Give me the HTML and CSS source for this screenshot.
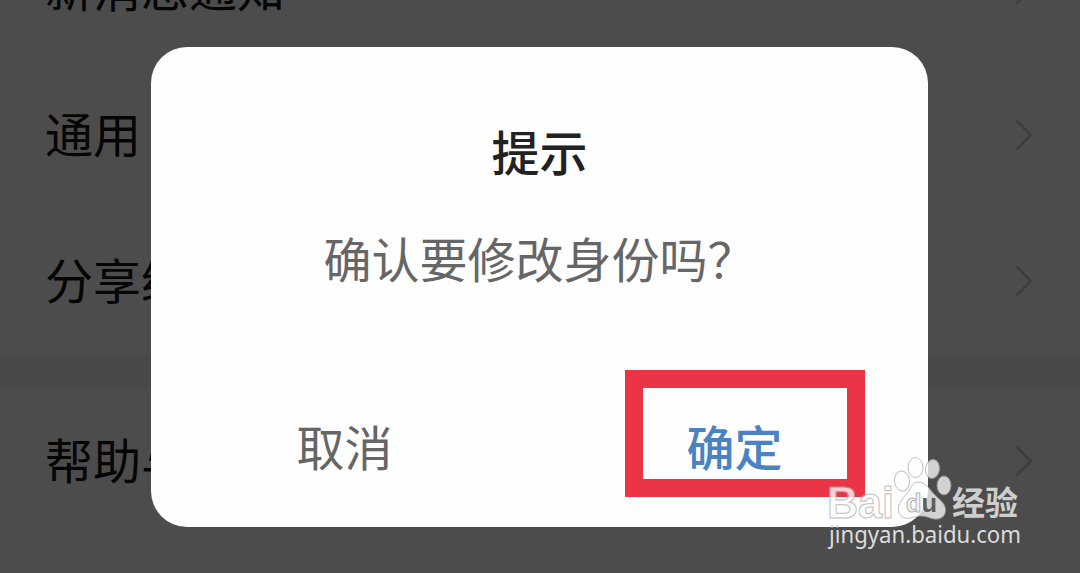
FILE: index.html
```
<!DOCTYPE html>
<html lang="zh-CN">
<head>
    <meta charset="UTF-8">
    <meta name="viewport" content="width=device-width, initial-scale=1.0">
    <title>设置</title>
    <link rel="stylesheet" href="styles.css">
</head>
<body>
    <div class="settings">
        <div class="settings-row">
            <span>新消息通知</span>
            <svg class="arrow" viewBox="0 0 24 40"><path d="M3 3 L20 20 L3 37"/></svg>
        </div>
        <div class="settings-row">
            <span>通用</span>
            <svg class="arrow" viewBox="0 0 24 40"><path d="M3 3 L20 20 L3 37"/></svg>
        </div>
        <div class="settings-row">
            <span>分享给</span>
            <svg class="arrow" viewBox="0 0 24 40"><path d="M3 3 L20 20 L3 37"/></svg>
        </div>
        <div class="settings-gap"></div>
        <div class="settings-row">
            <span>帮助与</span>
            <svg class="arrow" viewBox="0 0 24 40"><path d="M3 3 L20 20 L3 37"/></svg>
        </div>
    </div>

    <div class="overlay">
        <div class="dialog">
            <h1 class="dialog-title">提示</h1>
            <p class="dialog-message">确认要修改身份吗？</p>
            <div class="dialog-actions">
                <button class="dialog-button">取消</button>
                <button class="dialog-button confirm">确定</button>
            </div>
        </div>
    </div>

    <div class="highlight"></div>

    <svg class="watermark" viewBox="0 0 210 100">
        <g class="logo">
            <text class="logo-latin" x="7" y="67.500" textLength="67" lengthAdjust="spacingAndGlyphs">Bai</text>
            <ellipse cx="82" cy="31" rx="7.500" ry="10" transform="rotate(-8 82 31)"/>
            <ellipse cx="95.500" cy="17.500" rx="7.500" ry="10"/>
            <ellipse cx="112.500" cy="19" rx="7" ry="9.500" transform="rotate(8 112.500 19)"/>
            <ellipse cx="124" cy="35.500" rx="7" ry="9.500"/>
            <path d="M98 32 C106 32 109 39 115 45 C121 51 126 54 125.500 61 C125 68 118 71 110 68 C105 66 99 65 91 68 C83 70 76 64 79 55 C82 47 88 44 91 37 C93 34 95 32 98 32 Z"/>
        </g>
        <text class="logo-du" x="86" y="62" textLength="31" lengthAdjust="spacingAndGlyphs"><tspan class="logo-d">d</tspan>u</text>
        <text class="logo-cn" x="132" y="65" textLength="66" lengthAdjust="spacingAndGlyphs">经验</text>
        <text class="site" x="9" y="93" textLength="192" lengthAdjust="spacingAndGlyphs">jingyan.baidu.com</text>
    </svg>
</body>
</html>
```

FILE: styles.css
```
* {
    margin: 0;
    padding: 0;
    box-sizing: border-box;
}

body {
    position: relative;
    height: 573px;
    overflow: hidden;
    background: #4c4c4c;
    font-family: "Noto Sans CJK SC", sans-serif;
    font-size: 48px;
}

.settings {
    margin-top: -84px;
}

.settings-row {
    display: flex;
    align-items: center;
    justify-content: space-between;
    height: 146px;
    padding: 0 44px 0 45px;
    color: #050505;
    line-height: 70px;
}

.settings-row span {
    padding-bottom: 7px;
}

.settings-gap {
    height: 34px;
    background: #494949;
}

.arrow {
    width: 24px;
    height: 40px;
    padding: 3px 0;
    fill: none;
    stroke: #3d3d3d;
    stroke-width: 3;
}

.overlay {
    position: absolute;
    inset: 0;
    display: flex;
    align-items: flex-start;
    padding: 47px 0 0 151px;
}

.dialog {
    display: flex;
    flex-direction: column;
    width: 777px;
    height: 480px;
    padding-top: 68px;
    border-radius: 36px;
    background: #fefefe;
    text-align: center;
}

.dialog-title {
    color: #222;
    font-size: 48px;
    font-weight: 500;
    line-height: 70px;
}

.dialog-message {
    margin-top: 37px;
    color: #666;
    line-height: 70px;
}

.dialog-actions {
    display: flex;
    flex: 1;
    margin-top: 72px;
    border-top: 1px solid #fafafa;
}

.dialog-button {
    flex: 1;
    padding: 0 2px 2px 0;
    border: none;
    background: none;
    color: #666;
    font-family: inherit;
    font-size: 48px;
}

.dialog-button.confirm {
    padding-right: 0;
    border-left: 1px solid #fcfcfc;
    color: #4a83c3;
    font-weight: 500;
}

.highlight {
    position: absolute;
    left: 625px;
    top: 370px;
    width: 240px;
    height: 127px;
    border: 18px solid #eb3547;
}

.watermark {
    position: absolute;
    left: 820px;
    top: 450px;
    width: 210px;
    height: 100px;
    overflow: visible;
}

.logo {
    fill: #fff;
    stroke: #aaa;
    stroke-width: 1;
    opacity: 0.75;
}

.logo-latin {
    font-family: "Liberation Sans", sans-serif;
    font-size: 45px;
    font-weight: bold;
}

.logo-du {
    fill: #5c5c5c;
    font-family: "Liberation Sans", sans-serif;
    font-size: 25px;
    font-weight: bold;
}

.logo-d {
    fill: #f4f4f4;
    stroke: #b4b4b4;
    stroke-width: 1;
}

.logo-cn {
    fill: #cecece;
    font-size: 33px;
    font-weight: bold;
}

.site {
    fill: #dcdcdc;
    font-family: "Noto Sans", sans-serif;
    font-size: 23px;
}
```
